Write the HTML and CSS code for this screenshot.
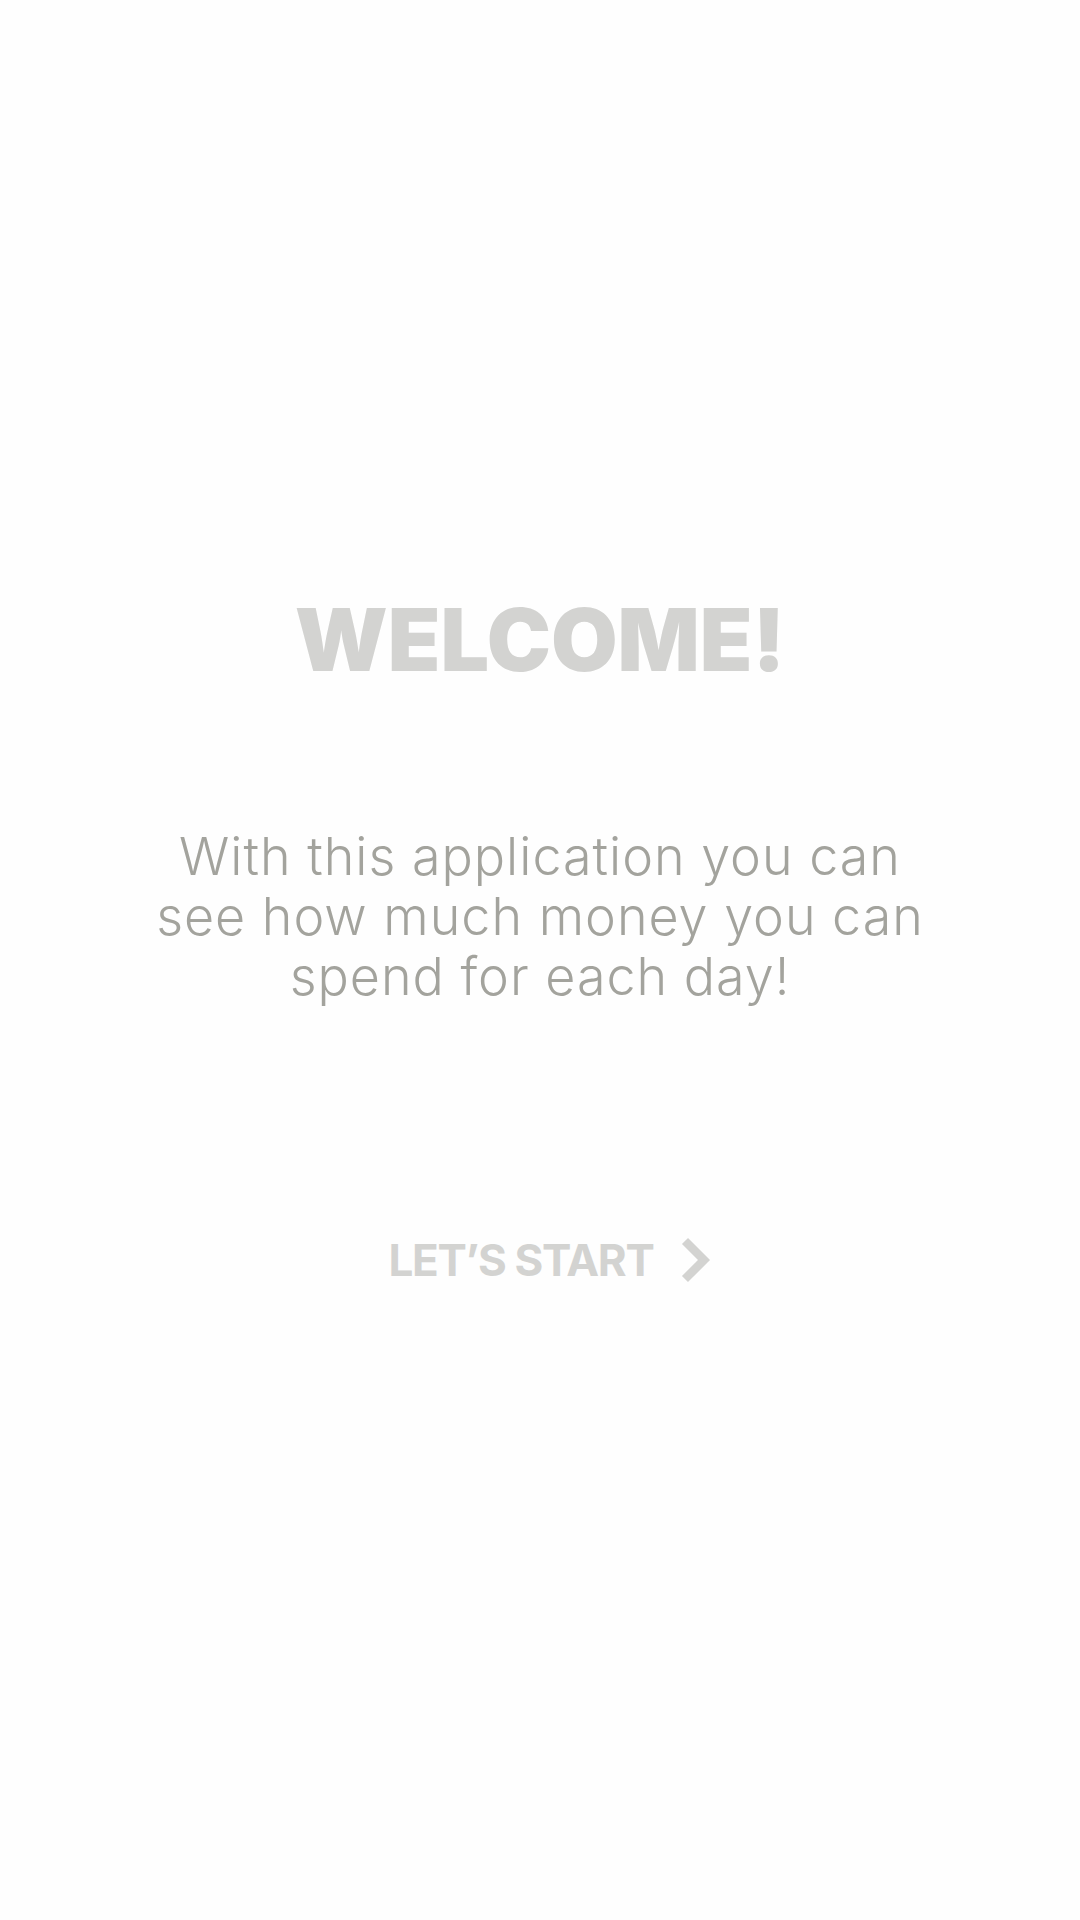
FILE: index.html
```html
<!DOCTYPE html>
<html lang="en">
<head>
<meta charset="utf-8">
<title>Welcome</title>
<link rel="stylesheet" href="styles.css">
</head>
<body>
<main class="screen">
  <h1 class="title">WELCOME!</h1>
  <p class="intro">With this application you can<br>see how much money you can<br>spend for each day!</p>
  <a class="start" href="#">
    <span class="start-label">LET’S START</span>
    <svg class="chevron" viewBox="0 0 30 46" width="30" height="46" aria-hidden="true">
      <path d="M4 4 L23 23 L4 42" fill="none" stroke="#d3d3d1" stroke-width="8.5" stroke-linejoin="miter"/>
    </svg>
  </a>
</main>
</body>
</html>
```
FILE: styles.css
```css
html, body {
  margin: 0;
  padding: 0;
  background: #fefefe;
}
.screen {
  width: 1080px;
  height: 1920px;
  display: flex;
  flex-direction: column;
  align-items: center;
  padding-top: 585px;
  box-sizing: border-box;
}
.title {
  margin: 0;
  font-family: Inter, "Noto Sans", sans-serif;
  font-weight: 900;
  font-size: 86px;
  line-height: 110px;
  color: #d3d3d1;
  letter-spacing: 0;
}
.intro {
  margin: 132px 0 0;
  width: 900px;
  text-align: center;
  font-family: Inter, "Noto Sans", sans-serif;
  font-weight: 300;
  font-size: 52px;
  letter-spacing: 1px;
  line-height: 60px;
  color: #a3a39d;
}
.start {
  margin-top: 228px;
  margin-left: 20px;
  display: flex;
  align-items: center;
  gap: 28px;
  text-decoration: none;
}
.start-label {
  font-family: Inter, "Noto Sans", sans-serif;
  font-weight: 700;
  font-size: 44px;
  letter-spacing: -1.3px;
  line-height: 50px;
  color: #d3d3d1;
}
.chevron {
  display: block;
}
```
